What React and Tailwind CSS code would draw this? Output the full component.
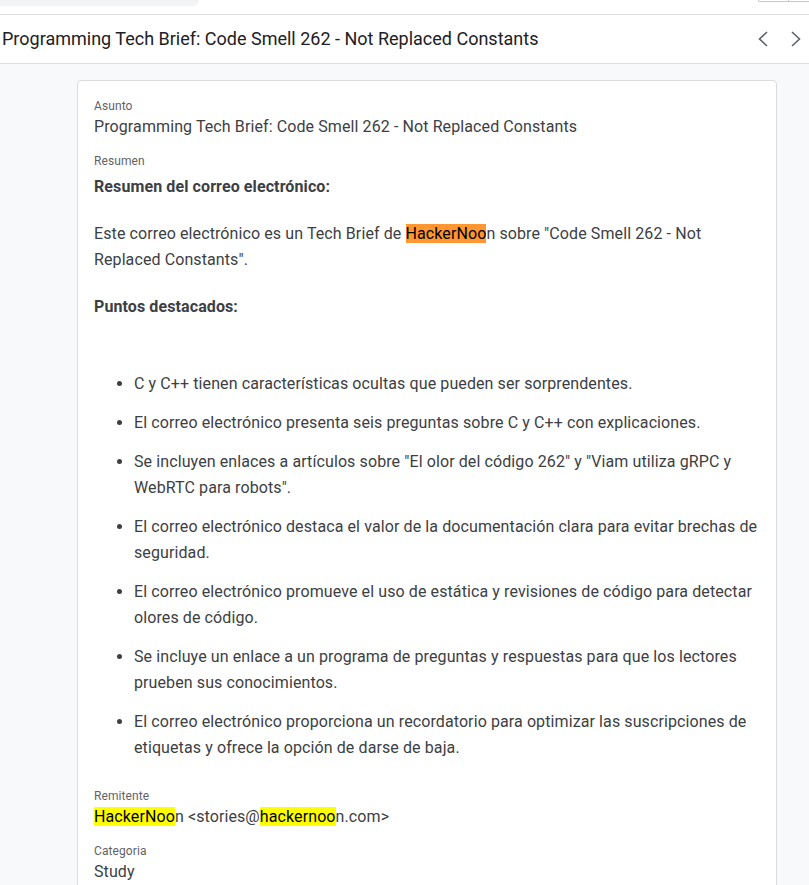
import React from 'react';

const bullets = [
  'C y C++ tienen características ocultas que pueden ser sorprendentes.',
  'El correo electrónico presenta seis preguntas sobre C y C++ con explicaciones.',
  'Se incluyen enlaces a artículos sobre "El olor del código 262" y "Viam utiliza gRPC y WebRTC para robots".',
  'El correo electrónico destaca el valor de la documentación clara para evitar brechas de seguridad.',
  'El correo electrónico promueve el uso de estática y revisiones de código para detectar olores de código.',
  'Se incluye un enlace a un programa de preguntas y respuestas para que los lectores prueben sus conocimientos.',
  'El correo electrónico proporciona un recordatorio para optimizar las suscripciones de etiquetas y ofrece la opción de darse de baja.',
];

function Chevron({ dir }) {
  const points = dir === 'left' ? '9,1 1.5,8 9,15' : '1,1 8.5,8 1,15';
  return (
    <svg width="10" height="16" viewBox="0 0 10 16" fill="none">
      <polyline points={points} stroke="#5f6368" strokeWidth="1.6" strokeLinejoin="miter" />
    </svg>
  );
}

function Field({ label, children, className = '' }) {
  return (
    <div className={className}>
      <div className="text-[12px] leading-4 text-[#5f6368]">{label}</div>
      {children}
    </div>
  );
}

export default function App() {
  return (
    <div className="w-[809px] h-[885px] overflow-hidden bg-[#f8f9fa] text-[#3c4043]" style={{ fontFamily: 'Roboto, "Noto Sans", sans-serif' }}>
      {/* top strip: search box and toolbar, cut off */}
      <div className="h-[15px] bg-white border-b border-[#e0e0e0] flex justify-between items-start">
        <div className="w-[199px] h-[6px] bg-[#f1f3f4] rounded-br-[8px]" />
        <div className="w-[51px] h-[2px] border-l border-b border-[#c4c7c5] rounded-bl-[2px] flex">
          <div className="w-[30px] border-r border-[#c4c7c5]" />
        </div>
      </div>

      {/* header */}
      <div className="h-[49px] bg-white border-b border-[#e0e0e0] flex items-center justify-between pl-[2px] pr-[8px]">
        <h1 className="text-[18px] leading-6 text-[#202124]">
          Programming Tech Brief: Code Smell 262 - Not Replaced Constants
        </h1>
        <div className="flex items-center gap-[23px]">
          <Chevron dir="left" />
          <Chevron dir="right" />
        </div>
      </div>

      {/* card */}
      <div className="mt-4 ml-[77px] w-[700px] bg-white border border-[#dadce0] rounded-[4px] px-4 pt-[17px] pb-6 tracking-[0.1px]">
        <Field label="Asunto">
          <div className="text-[16px] leading-[26px]">Programming Tech Brief: Code Smell 262 - Not Replaced Constants</div>
        </Field>

        <Field label="Resumen" className="mt-[13px]">
          <div className="mt-[5px] text-[16px] leading-[26px]">
            <p className="font-bold">Resumen del correo electrónico:</p>
            <p className="mt-[21px]">
              Este correo electrónico es un Tech Brief de{' '}
              <span className="bg-[#ff9632] text-black">HackerNoo</span>n sobre "Code Smell 262 - Not Replaced Constants".
            </p>
            <p className="mt-[21px] font-bold">Puntos destacados:</p>
            <ul className="mt-[51px] pl-10 list-disc flex flex-col gap-[13px]">
              {bullets.map((b) => (
                <li key={b}>{b}</li>
              ))}
            </ul>
          </div>
        </Field>

        <Field label="Remitente" className="mt-[27px]">
          <div className="text-[16px] leading-[26px]">
            <span className="bg-[#ffff00] text-black">HackerNoo</span>n &lt;stories@
            <span className="bg-[#ffff00] text-black">hackernoo</span>n.com&gt;
          </div>
        </Field>

        <Field label="Categoria" className="mt-[13px]">
          <div className="text-[16px] leading-[26px]">Study</div>
        </Field>
      </div>
    </div>
  );
}
